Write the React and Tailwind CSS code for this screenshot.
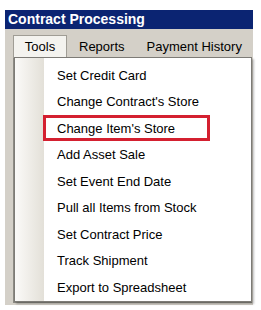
const items = [
  "Set Credit Card",
  "Change Contract's Store",
  "Change Item's Store",
  "Add Asset Sale",
  "Set Event End Date",
  "Pull all Items from Stock",
  "Set Contract Price",
  "Track Shipment",
  "Export to Spreadsheet",
];

export default function App() {
  return (
    <div className="w-[261px] h-[310px] bg-white overflow-hidden pt-[10px] pl-[5px] font-['Liberation_Sans',sans-serif]">
      <div className="relative w-[248px] h-[295px] bg-[#d4d0c8]">
        {/* title bar */}
        <div className="h-[19px] bg-[#0b2472] text-white font-bold text-[14px] leading-[19px] pl-[3px]">
          Contract Processing
        </div>

        {/* tab strip */}
        <div className="flex items-end h-[29px] pl-[8px] text-[13px] text-black">
          <div className="h-[23px] w-[54px] bg-[#f4f3ef] border border-b-0 border-[#a09d95] flex items-center justify-center">
            Tools
          </div>
          <div className="h-[22px] flex items-center pl-[12px]">Reports</div>
          <div className="h-[22px] flex items-center pl-[22px]">Payment History</div>
        </div>

        {/* tab body behind the menu */}
        <div className="ml-[8px] mr-[1px] h-[245px] border border-[#8c8a83] bg-white" />

        {/* dropdown menu */}
        <div className="absolute left-[9px] top-[47px] w-[238px] h-[245px] bg-white border border-[#7d7b76] shadow-[2px_2px_2px_rgba(0,0,0,0.25)] flex">
          <div className="w-[29px] bg-gradient-to-r from-[#fbfaf8] to-[#e3e0d8]" />
          <div className="flex-1 flex flex-col pt-[4px]">
            {items.map((label, i) => (
              <div key={label} className="h-[27px] flex items-center pl-[13px] text-[13px] text-black">
                <span
                  className={
                    i === 2
                      ? "-ml-[14px] pl-[11px] w-[167px] h-[26px] flex items-center border-[3px] border-[#d42030]"
                      : ""
                  }
                >
                  {label}
                </span>
              </div>
            ))}
          </div>
        </div>
      </div>
    </div>
  );
}
